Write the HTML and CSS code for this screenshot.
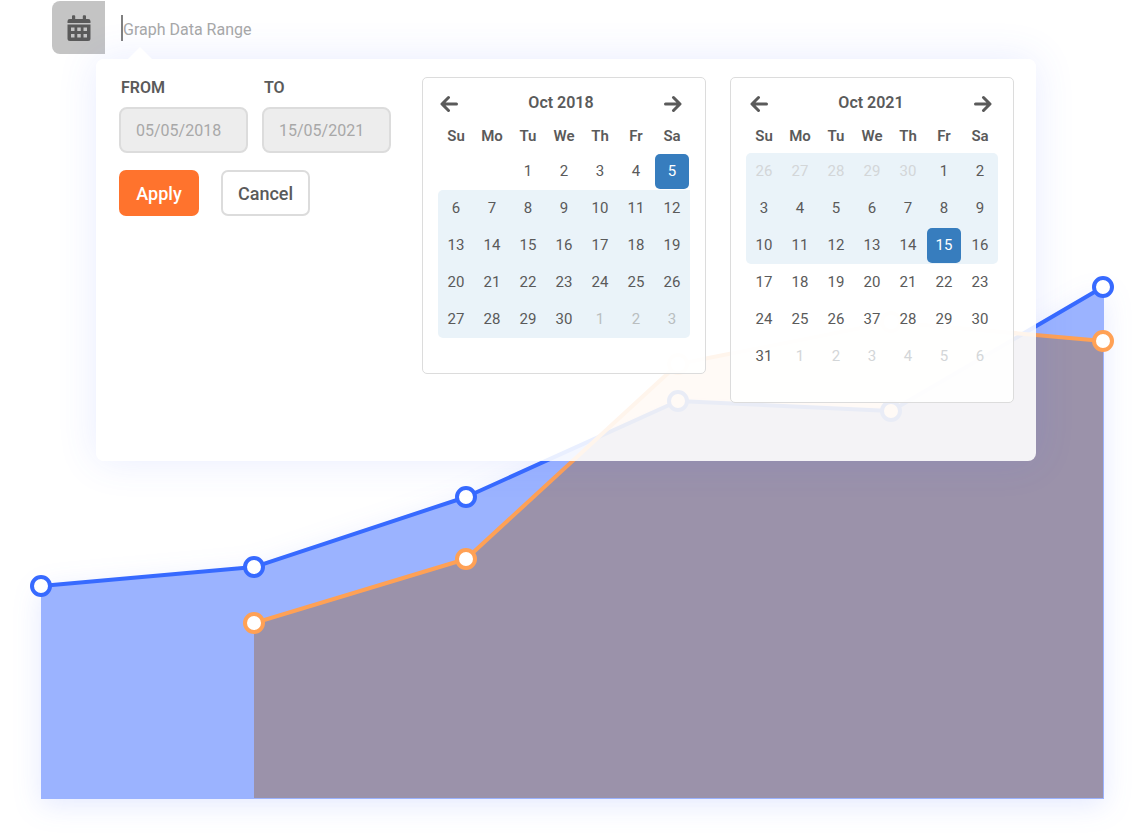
FILE: index.html
```
<!DOCTYPE html>
<html lang="en">
<head>
<meta charset="UTF-8">
<meta name="viewport" content="width=device-width, initial-scale=1">
<title>Graph Data Range</title>
<link rel="stylesheet" href="styles.css">
<script src="script.js" defer></script>
</head>
<body>

<header class="toolbar">
	<div class="range-field">
		<label class="range-icon" for="range" aria-label="Graph Data Range">
			<svg width="24" height="26" viewBox="0 0 24 26">
				<path d="M5 4V1.2Q5 .2 6 .2H7.2Q8.2 .2 8.2 1.2V4H15.8V1.2Q15.8 .2 16.8 .2H18Q19 .2 19 1.2V4H21.200Q23.500 4 23.500 6.300V8H.5V6.300Q.5 4 2.800 4Z"/>
				<path fill-rule="evenodd" d="M.5 9.500H23.500V23.500Q23.500 26 21 26H3Q.5 26 .5 23.500ZM4 12.500V16H7.500V12.500ZM10.250 12.500V16H13.750V12.500ZM16.500 12.500V16H20V12.500ZM4 19V22.500H7.500V19ZM10.250 19V22.500H13.750V19ZM16.500 19V22.500H20V19Z"/>
			</svg>
		</label>
		<span class="caret"></span>
		<input class="range-input" id="range" type="text" placeholder="Graph Data Range">
	</div>

	<div class="popover">
		<form class="range-form">
			<div class="fields">
				<div class="field">
					<label for="from">FROM</label>
					<input id="from" type="text" placeholder="05/05/2018">
				</div>
				<div class="field">
					<label for="to">TO</label>
					<input id="to" type="text" placeholder="15/05/2021">
				</div>
			</div>
			<div class="actions">
				<button class="btn btn-apply" type="button">Apply</button>
				<button class="btn btn-cancel" type="button">Cancel</button>
			</div>
		</form>

		<div class="calendars">
			<section class="calendar calendar-from">
				<div class="calendar-head">
					<button class="nav" type="button" aria-label="Previous month">
						<svg width="18" height="18" viewBox="0 0 18 18"><path d="M8.500 2.500L2 9L8.500 15.500M2.500 9H16.500"/></svg>
					</button>
					<h2>Oct 2018</h2>
					<button class="nav" type="button" aria-label="Next month">
						<svg width="18" height="18" viewBox="0 0 18 18"><path d="M9.500 2.500L16 9L9.500 15.500M15.500 9H1.500"/></svg>
					</button>
				</div>
				<table class="days" id="days-from"></table>
			</section>

			<section class="calendar calendar-to">
				<div class="calendar-head">
					<button class="nav" type="button" aria-label="Previous month">
						<svg width="18" height="18" viewBox="0 0 18 18"><path d="M8.500 2.500L2 9L8.500 15.500M2.500 9H16.500"/></svg>
					</button>
					<h2>Oct 2021</h2>
					<button class="nav" type="button" aria-label="Next month">
						<svg width="18" height="18" viewBox="0 0 18 18"><path d="M9.500 2.500L16 9L9.500 15.500M15.500 9H1.500"/></svg>
					</button>
				</div>
				<table class="days" id="days-to"></table>
			</section>
		</div>
	</div>
</header>

<main>
	<svg class="chart" viewBox="0 54 1144 780">
		<path class="area area-blue" d="M41 586L254 567L466 497L678 401L891 411L1104 287V799H41Z"/>
		<path class="line blue" d="M41 586L254 567L466 497L678 401L891 411L1103 287"/>
		<g class="dot blue">
			<circle cx="41" cy="586" r="9"/>
			<circle cx="254" cy="567" r="9"/>
			<circle cx="466" cy="497" r="9"/>
			<circle cx="678" cy="401" r="9"/>
			<circle cx="891" cy="411" r="9"/>
			<circle cx="1103" cy="287" r="9"/>
		</g>
		<path class="area area-orange" d="M254 623L466 559L678 364L891 322L1103 341V798H254Z"/>
		<path class="line orange" d="M254 623L466 559L678 364L891 322L1103 341"/>
		<g class="dot orange">
			<circle cx="254" cy="623" r="9"/>
			<circle cx="466" cy="559" r="9"/>
			<circle cx="678" cy="364" r="9"/>
			<circle cx="891" cy="322" r="9"/>
			<circle cx="1103" cy="341" r="9"/>
		</g>
	</svg>
</main>

</body>
</html>
```
FILE: styles.css
```
* {
	box-sizing: border-box;
}
body {
	margin: 0;
	background: white;
	color: #5a5a5a;
	font-family: Roboto, sans-serif;
	font-size: 16px;
}
button, input {
	font-family: inherit;
	margin: 0;
}
button {
	padding: 0;
	border: 0;
	background: none;
	color: inherit;
	cursor: pointer;
}

/* top field */
.toolbar {
	position: relative;
	z-index: 1;
	padding: 1px 108px 0 52px;
}
.range-field {
	display: flex;
	align-items: center;
}
.range-icon {
	display: flex;
	align-items: center;
	justify-content: center;
	width: 53px;
	height: 53px;
	border-radius: 8px 0 0 8px;
	background: #c4c4c4;
}
.range-icon svg {
	fill: #5a5a5a;
}
.caret {
	width: 2px;
	height: 26px;
	margin-left: 16px;
	background: #808080;
}
.range-input {
	flex: 1;
	height: 53px;
	padding: 3px 0 0;
	border: 0;
	outline: 0;
	background: none;
	font-size: 16px;
}
::placeholder {
	color: #a8a8a8;
	opacity: 1;
}

/* popover */
.popover {
	position: absolute;
	top: 59px;
	left: 96px;
	right: 108px;
	display: flex;
	align-items: flex-start;
	justify-content: space-between;
	padding: 18px 22px 58px 23px;
	border-radius: 8px;
	background: rgba(255, 255, 255, 0.89);
	box-shadow: 0 0 40px rgba(62, 100, 255, 0.12);
}
.popover::before {
	content: "";
	position: absolute;
	bottom: 100%;
	left: 32px;
	border: solid transparent;
	border-width: 0 12px 12px;
	border-bottom-color: white;
}
.fields {
	display: flex;
	gap: 14px;
}
.field {
	display: flex;
	flex-direction: column;
	gap: 8px;
}
.field label {
	padding-left: 2px;
	line-height: 22px;
	font-weight: 600;
}
.field input {
	width: 129px;
	height: 46px;
	padding: 0 15px;
	border: 2px solid #dcdcdc;
	border-radius: 8px;
	background: #ededed;
	font-size: 16px;
}
.actions {
	display: flex;
	gap: 22px;
	margin-top: 17px;
}
.btn {
	height: 46px;
	border-radius: 7px;
	font-size: 18px;
	font-weight: 500;
}
.btn-apply {
	width: 80px;
	background: #ff732d;
	color: white;
}
.btn-cancel {
	width: 89px;
	border: 2px solid #dcdcdc;
	background: white;
}

/* calendars */
.calendars {
	display: flex;
	align-items: flex-start;
	gap: 24px;
}
.calendar {
	width: 284px;
	padding: 14px 15px 27px;
	border: 1px solid #dcdcdc;
	border-radius: 5px;
	background: rgba(255, 255, 255, 0.88);
}
.calendar-from {
	padding-bottom: 35px;
}
.calendar-head {
	display: flex;
	align-items: center;
	justify-content: space-between;
	height: 24px;
	margin-bottom: 3px;
	padding: 0 8px 0 2px;
}
.calendar-to .calendar-head {
	padding: 0 6px 0 4px;
}
.calendar-head h2 {
	margin: 0;
	font-size: 16px;
	font-weight: 600;
	line-height: 22px;
	padding-bottom: 2px;
}
.nav svg {
	display: block;
	fill: none;
	stroke: #5a5a5a;
	stroke-width: 3;
	stroke-linecap: round;
	stroke-linejoin: round;
}
.days {
	width: 100%;
	table-layout: fixed;
	border-spacing: 0;
	font-size: 15px;
}
.days th {
	height: 34px;
	padding: 0;
	font-weight: 600;
}
.days td {
	height: 37px;
	padding: 0;
}
.day {
	display: block;
	width: 34px;
	height: 35px;
	margin: auto;
	padding-bottom: 2px;
	border-radius: 5px;
	font-size: 15px;
}
.muted {
	color: #b9bec0;
}
.calendar-to .muted {
	color: #d3d6d8;
}
.selected {
	background: #377dbe;
	color: white;
}
.in-range td {
	background: #eaf3f9;
}
.range-start td:first-child {
	border-top-left-radius: 5px;
}
.range-start td:last-child {
	border-top-right-radius: 5px;
}
.calendar-from .range-start td:last-child {
	border-top-right-radius: 0;
}
.range-end td:first-child {
	border-bottom-left-radius: 5px;
}
.range-end td:last-child {
	border-bottom-right-radius: 5px;
}

/* chart */
.chart {
	display: block;
	width: 100%;
	height: auto;
	isolation: isolate;
}
.area-blue {
	fill: #9bb3ff;
	filter: drop-shadow(0 6px 14px rgba(62, 100, 255, 0.14));
}
.area-orange {
	fill: #ffd0aa;
	mix-blend-mode: multiply;
}
.line {
	fill: none;
	stroke-width: 4;
	stroke-linejoin: round;
}
.dot {
	fill: white;
	stroke-width: 4;
}
.blue {
	stroke: #376aff;
}
.orange {
	stroke: #ffa155;
}
```
FILE: script.js
```
var names = ['Su', 'Mo', 'Tu', 'We', 'Th', 'Fr', 'Sa'];

/* negative numbers are days of the neighbouring month */
var from = [
	['', '', 1, 2, 3, 4, 5],
	[6, 7, 8, 9, 10, 11, 12],
	[13, 14, 15, 16, 17, 18, 19],
	[20, 21, 22, 23, 24, 25, 26],
	[27, 28, 29, 30, -1, -2, -3]
];
var to = [
	[-26, -27, -28, -29, -30, 1, 2],
	[3, 4, 5, 6, 7, 8, 9],
	[10, 11, 12, 13, 14, 15, 16],
	[17, 18, 19, 20, 21, 22, 23],
	[24, 25, 26, 37, 28, 29, 30],
	[31, -1, -2, -3, -4, -5, -6]
];

function fill(id, weeks, selected, first, last)
{
	var html = '<thead><tr>';
	names.forEach(function (n) { html += '<th scope="col">' + n + '</th>'; });
	html += '</tr></thead><tbody>';
	weeks.forEach(function (week, i) {
		var cls = '';
		if (i >= first && i <= last) cls += 'in-range';
		if (i == first) cls += ' range-start';
		if (i == last) cls += ' range-end';
		html += '<tr class="' + cls + '">';
		week.forEach(function (d) {
			var c = 'day';
			if (d < 0) c += ' muted';
			if (d === selected) c += ' selected';
			html += '<td>';
			if (d !== '')
				html += '<button type="button" class="' + c + '">' + Math.abs(d) + '</button>';
			html += '</td>';
		});
		html += '</tr>';
	});
	document.getElementById(id).innerHTML = html + '</tbody>';
}

fill('days-from', from, 5, 1, 4);
fill('days-to', to, 15, 0, 2);
```
